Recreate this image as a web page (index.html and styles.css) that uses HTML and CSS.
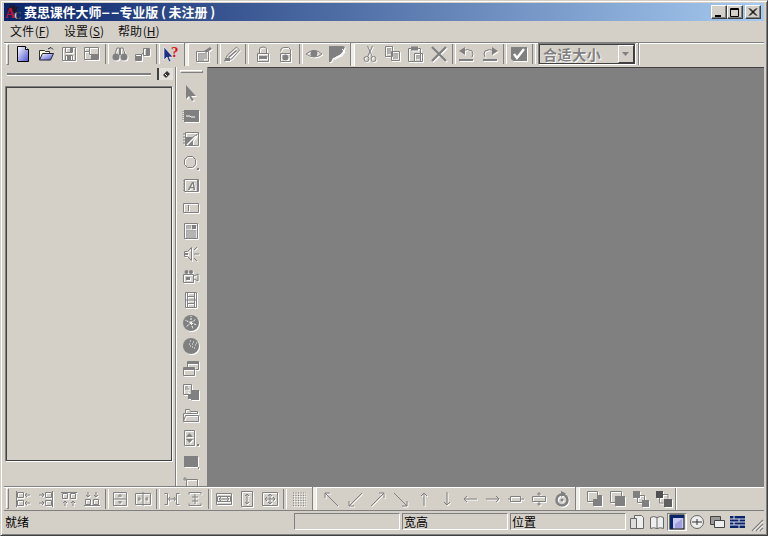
FILE: index.html

```html
<!DOCTYPE html>
<html lang="zh">
<head>
  <meta charset="UTF-8" />
  <title>赛思课件大师--专业版 ( 未注册 )</title>
  <link rel="stylesheet" href="styles.css">
</head>
<body>
  <svg class="defs" width="0" height="0"><linearGradient id="blue" x1="0" y1="0" x2="1" y2="1"><stop offset="0" stop-color="#fff"/><stop offset="1" stop-color="#4a52d0"/></linearGradient></svg>
  <div class="window">
    <div class="titlebar">
      <svg class="logo" width="17" height="18" viewBox="0 0 17 18"><path d="M5 0l2 3 3-2 0 3 4 0-3 3 2 3-5-1-3 2 0-4-3-1 3-2z" fill="#1a1a2a"/><text x="0" y="15" class="logo-a">A</text><text x="9" y="16" class="logo-c">C</text></svg>
      <span class="title-text">赛思课件大师<span class="dash">--</span>专业版 ( 未注册 )</span>
      <div class="caption-btns">
        <button class="cap"><svg width="10" height="9"><rect x="1" y="7" width="6" height="2" fill="#000"/></svg></button>
        <button class="cap"><svg width="10" height="9"><path d="M0.5 0.5h8v8h-8zM0.5 1.5h8" fill="none" stroke="#000"/></svg></button>
        <button class="cap close"><svg width="10" height="9"><path d="M1 0.5l7 7M2 0.5l7 7M8 0.5l-7 7M9 0.5l-7 7" stroke="#000" fill="none"/></svg></button>
      </div>
    </div>

    <div class="menubar">
      <span class="menu">文件 (<u>F</u>)</span>
      <span class="menu">设置 (<u>S</u>)</span>
      <span class="menu">帮助 (<u>H</u>)</span>
    </div>

    <div class="toolbar top-bar" id="topBar"></div>

    <div class="main">
      <div class="side-panel">
        <div class="panel-head">
          <div class="panel-line"></div>
          <div class="panel-pin"><svg width="9" height="9" viewBox="0 0 9 9"><path d="M1 5l4-4 3 3-4 4z" fill="#333"/><path d="M3 4l2 2" stroke="#fff"/></svg></div>
        </div>
        <div class="panel-box"></div>
      </div>
      <div class="tool-column">
        <div class="column-grip"></div>
        <div class="column-icons" id="toolColumn"></div>
      </div>
      <div class="canvas"></div>
    </div>

    <div class="toolbar bottom-bar" id="bottomBar"></div>

    <div class="statusbar">
      <div class="status-msg">就绪</div>
      <div class="status-cell blank"></div>
      <div class="status-cell">宽高</div>
      <div class="status-cell wide">位置</div>
      <div class="status-icons" id="statusIcons"></div>
      <svg class="size-grip" width="14" height="14" viewBox="0 0 14 14"><path d="M13 2L2 13M13 6l-7 7M13 10l-3 3" stroke="#808080" stroke-width="1.4"/><path d="M13 3.5L3.5 13M13 7.5L7.500 13M13 11.5L11.500 13" stroke="#fff"/></svg>
    </div>
  </div>
  <script src="app.js"></script>
</body>
</html>
```

FILE: styles.css

```css
* { box-sizing: border-box; }
html, body { margin: 0; padding: 0; }
body {
  width: 768px;
  height: 536px;
  overflow: hidden;
  background: #d4d0c8;
  font-family: "Noto Sans CJK SC", "Liberation Sans", sans-serif;
  font-size: 12px;
  color: #000;
}
.defs { position: absolute; }
.window {
  width: 768px;
  height: 536px;
  display: flex;
  flex-direction: column;
  padding: 3px;
  background: #d4d0c8;
  border: 1px solid #404040;
  border-top-color: #d4d0c8;
  border-left-color: #d4d0c8;
  box-shadow: inset 1px 1px 0 #fff, inset -1px -1px 0 #808080;
}

.titlebar {
  height: 18px;
  margin-top: -1px;
  display: flex;
  align-items: center;
  padding: 0 3px 0 1px;
  background: linear-gradient(to right, #0a246a, #a6caf0);
  color: #fff;
  flex: none;
}
.logo { flex: none; margin-right: 2px; overflow: visible; }
.logo-a { font: bold 14px "Liberation Serif", serif; fill: #c8102e; }
.logo-c { font: bold 10px "Liberation Serif", serif; fill: #eee; stroke: #111; stroke-width: 0.4px; }
.title-text { font-weight: bold; font-size: 13px; line-height: 18px; letter-spacing: -0.1px; white-space: pre; }
.dash {
  display: inline-block;
  width: 18px;
  transform: scaleX(2);
  transform-origin: 0 50%;
}
.caption-btns { margin-left: auto; display: flex; }
.cap {
  width: 16px;
  height: 14px;
  padding: 0;
  background: #d4d0c8;
  border: 1px solid;
  border-color: #fff #404040 #404040 #fff;
  box-shadow: inset -1px -1px 0 #808080;
  display: flex;
  align-items: center;
  justify-content: center;
}
.cap.close { margin-left: 2px; }

.menubar {
  height: 21px;
  flex: none;
  display: flex;
  align-items: center;
  padding: 0 0 2px 6px;
  font-size: 12px;
  color: #111;
}
.menu { width: 54px; flex: none; white-space: pre; word-spacing: -2px; }
.menu u { text-decoration: underline; }

.toolbar {
  display: flex;
  align-items: center;
  flex: none;
  border-top: 1px solid #808080;
  box-shadow: inset 0 1px 0 #fff;
  padding-left: 2px;
}
.top-bar { height: 25px; padding-bottom: 2px; }
.bottom-bar { height: 25px; border-bottom: 1px solid #808080; }

.grip {
  width: 3px;
  height: 21px;
  flex: none;
  margin-right: 2px;
  border: 1px solid;
  border-color: #fff #808080 #808080 #fff;
}
.grip.split {
  width: 5px;
  height: 23px;
  margin-left: 2px;
  margin-right: 3px;
  border-left-color: #808080;
  border-right-color: #fff;
  border-top: 0;
  border-bottom: 0;
  background: #f0eee8;
}
.bar-end {
  width: 2px;
  height: 22px;
  flex: none;
  border-left: 1px solid #808080;
  border-right: 1px solid #fff;
}
.tb {
  width: 23px;
  height: 22px;
  flex: none;
  display: flex;
  align-items: center;
  justify-content: center;
}
.tb svg, .col svg { overflow: visible; }
.dis svg { filter: drop-shadow(1px 1px 0 #fff); }
.sep {
  width: 5px;
  height: 20px;
  flex: none;
}
.sep.mid { width: 6px; }
.sep.wide { width: 8px; }
.sep::before {
  content: "";
  display: block;
  width: 2px;
  height: 20px;
  margin-left: 2px;
  border-left: 1px solid #808080;
  border-right: 1px solid #fff;
}
.combo {
  width: 98px;
  height: 22px;
  flex: none;
  display: flex;
  align-items: center;
  padding-left: 4px;
  margin-right: 2px;
  border: 1px solid;
  border-color: #808080 #fff #fff #808080;
  box-shadow: inset 1px 1px 0 #404040, inset -1px -1px 0 #404040;
  color: #808080;
  font-size: 14px;
  line-height: 18px;
  font-weight: bold;
  letter-spacing: 0.6px;
  text-shadow: 1px 1px 0 #fff;
}
.combo-arrow {
  width: 16px;
  height: 18px;
  margin-left: auto;
  margin-right: 1px;
  background: #d4d0c8;
  border: 1px solid;
  border-color: #fff #404040 #404040 #fff;
  display: flex;
  align-items: center;
  justify-content: center;
}

.main {
  flex: 1;
  min-height: 0;
  display: flex;
}
.side-panel {
  width: 172px;
  flex: none;
  padding: 0 1px;
  display: flex;
  flex-direction: column;
  border-right: 1px solid #808080;
  box-shadow: 1px 0 0 #fff;
}
.panel-head {
  height: 19px;
  flex: none;
  display: flex;
  align-items: center;
  padding: 0 0 5px 2px;
}
.panel-line {
  width: 144px;
  height: 2px;
  background: #808080;
  border-bottom: 1px solid #fff;
  box-sizing: content-box;
}
.panel-pin {
  width: 16px;
  height: 12px;
  margin-left: 6px;
  border-left: 2px solid #404040;
  display: flex;
  align-items: center;
  justify-content: center;
  background: #e4e0da;
}
.panel-box {
  width: 168px;
  height: 376px;
  border: 1px solid;
  border-color: #808080 #fff #fff #808080;
  box-shadow: inset 1px 1px 0 #404040, inset -1px -1px 0 #404040;
  background: #d4d0c8;
}
.tool-column {
  width: 31px;
  flex: none;
  margin-left: 1px;
  overflow: hidden;
  border-right: 1px solid #808080;
}
.column-grip {
  width: 23px;
  height: 3px;
  margin: 3px 0 0 3px;
  border: 1px solid;
  border-color: #fff #808080 #808080 #fff;
}
.column-icons { display: flex; flex-direction: column; margin-top: 8px; margin-left: 2px; }
.col {
  width: 24px;
  height: 23px;
  flex: none;
  display: flex;
  align-items: center;
  justify-content: center;
}
.canvas {
  flex: 1;
  background: #808080;
  border-top: 1px solid #404040;
}

.statusbar {
  height: 21px;
  flex: none;
  display: flex;
  align-items: center;
  position: relative;
  padding-left: 1px;
}
.status-msg { width: 289px; flex: none; }
.status-cell {
  width: 106px;
  height: 17px;
  flex: none;
  margin-right: 2px;
  padding-left: 1px;
  line-height: 16px;
  border: 1px solid;
  border-color: #808080 #fff #fff #808080;
}
.status-cell.wide { width: 116px; margin-right: 0; }
.status-icons { display: flex; margin-left: 1px; }
.stat {
  width: 20px;
  height: 18px;
  flex: none;
  display: flex;
  align-items: center;
  justify-content: center;
}
.stat.on {
  background: #e8e6e0;
  border: 1px solid;
  border-color: #808080 #fff #fff #808080;
}
.size-grip { position: absolute; right: 0; bottom: 0; }
.q { font: bold 15px "Liberation Serif", serif; fill: #e01010; }
.a { font: italic bold 11px "Liberation Sans", sans-serif; fill: #808080; }
```

FILE: app.js

```js
// every icon is a 16x16 drawing, gray ones get a white drop shadow from css
const S = 'fill="none" stroke="#808080"';
const G = 'fill="#808080"';
const icons = {
  newdoc: '<path d="M2.5 0.5h8l3 3v12h-11z" fill="url(#blue)" stroke="#000"/><path d="M10.5 0.5v3h3" fill="#fff" stroke="#000"/>',
  open: '<path d="M1.5 14V4.5h5l1 1h4v2" fill="#ffd" stroke="#333"/><path d="M1.5 14l3-6.5h11l-3 6.5z" fill="url(#blue)" stroke="#223"/><path d="M10 3l3-1.500 2 2" fill="none" stroke="#223"/>',
  save: `<path d="M1.5 1.5h13v13h-13z" ${S}/><path d="M4.5 1.5v5h7v-5M4.5 14.500v-5h7v5" ${S}/><rect x="9" y="2" width="2" height="4" ${G}/><rect x="6" y="10" width="4" height="4" ${G}/>`,
  saveall: `<path d="M0.500 1.5h14v12h-14zM0.500 5.500h5v3h9M5.500 5.500v-4" ${S}/><rect x="7" y="9" width="7" height="4" ${G}/>`,
  binoc: `<circle cx="4" cy="11" r="3.500" ${G}/><circle cx="12" cy="11" r="3.500" ${G}/><path d="M3 8l2-6h2.500v7h1V2H11l2 6" ${S}/>`,
  link: `<path d="M0.500 8.500h6v6h-6zM8.500 2.500h6v7h-6zM6 9l3-3" ${S}/><rect x="1" y="10" width="5" height="4" ${G}/><rect x="11" y="3" width="3" height="6" ${G}/>`,
  help: '<path d="M1 1v13l3-3 2 5 2-1-2-4h4z" fill="#1c2f86" stroke="#fff" stroke-width="0.6"/><text x="8" y="11" class="q">?</text>',
  props: `<path d="M0.500 5.500h12v10h-12z" ${S}/><path d="M2 8h9M2 10h9M2 12h9M2 14h6" ${S}/><path d="M8 5l6-4 2 2-6 4z" ${G}/>`,
  edit: `<path d="M0.500 15l3-6 9-8 3 3-8 9z" ${S}/><path d="M4 11l8-7 1 1-8 7z" ${G}/><path d="M1 12h5v3H1z" ${G}/>`,
  lock: `<path d="M4.500 7V3q0-2 3.500-2t3.500 2v4" ${S}/><path d="M2.500 7.500h11v8h-11z" ${S}/><rect x="4" y="10" width="8" height="3" ${G}/>`,
  lock2: `<path d="M2.500 5.500q0-4 3-4h5l2 2v4" ${S}/><path d="M2.500 7.500h10v8h-10z" ${S}/><circle cx="7.500" cy="11.500" r="3" ${G}/>`,
  eye: `<path d="M0 8q8-7 16 0q-8 6-16 0z" ${S}/><circle cx="8" cy="7.500" r="3.500" ${G}/>`,
  flag: `<path d="M0 0h14l2 1-3 6-5 4-4 1-2 4H0z" ${G}/><path d="M13 3l2 2-3 4-5 2-2 2" fill="none" stroke="#fff"/>`,
  cut: `<circle cx="4.500" cy="13" r="2.500" ${S}/><circle cx="11.500" cy="13" r="2.500" ${S}/><path d="M5.500 11L10.500 0M10.500 11L5.500 0" ${S}/>`,
  copy: `<path d="M0.500 0.500h7v10h-7zM6.500 5.500h8v9h-8z" ${S}/><path d="M2 3h4M2 5h4M2 7h4M8 8h5M8 10h5M8 12h5" ${S}/>`,
  paste: `<path d="M0.500 2.500h12v13h-12z" ${S}/><path d="M3 0.500h7v4H3z" ${G}/><path d="M6.500 7.500h8v8h-8zM8 10h5M8 12h5" ${S}/>`,
  del: '<path d="M1 1l14 14M15 1L1 15" stroke="#808080" stroke-width="2.400" fill="none"/>',
  undo: `<path d="M0 14h14" stroke="#808080" stroke-width="2"/><path d="M3 5q6-3 10 0 2 3 0 6" ${S}/><path d="M6 1L0 5l6 4z" ${G}/>`,
  redo: `<path d="M1 14h14" stroke="#808080" stroke-width="2"/><path d="M13 5q-6-3-10 0-2 3 0 6" ${S}/><path d="M10 1l6 4-6 4z" ${G}/>`,
  check: `<path d="M0 1h16v14H2l-2-2z" ${G}/><path d="M3 8l3 4 7-9" stroke="#fff" stroke-width="2.400" fill="none"/>`,
  arrow: `<path d="M3 0v14l3-3 3 5 2-1-3-4h5z" ${G}/>`,
  frame: `<rect x="1" y="2" width="15" height="12" ${G}/><path d="M3 8h4l1 1h4" stroke="#fff" fill="none"/><path d="M0 3v10" stroke="#808080" stroke-dasharray="1 1"/>`,
  pic: `<path d="M2.500 1.500h13v13h-13z" ${S}/><rect x="2" y="6" width="8" height="9" ${G}/><path d="M15 2L8 7l-3 6 5-3z" ${G}/><path d="M4 14l9-9" stroke="#fff" stroke-width="1.500"/><path d="M0 3h2M0 6h2M0 9h2M0 12h2" stroke="#808080"/>`,
  circle: `<path d="M4.500 2.500h5l3 3v5l-3 3h-5l-3-3v-5z" ${S}/><rect x="14" y="14" width="2" height="2" ${G}/>`,
  atext: `<path d="M1.500 2.500h14v12h-14z" ${S}/><path d="M0 4h2M0 7h2M0 10h2M0 13h2" stroke="#808080"/><text x="5" y="13" class="a">A</text><path d="M14.500 3v11" stroke="#808080"/>`,
  field: `<path d="M0.500 3.500h15v9h-15z" ${S}/><path d="M5.500 5v6" ${S}/>`,
  lines: `<path d="M1.500 0.500h13v15h-13z" ${S}/><path d="M3 3h5M3 5h5M3 8h10M3 10h10M3 12h10M3 14h10" ${S}/><rect x="9" y="2" width="4" height="4" ${G}/>`,
  sound: `<path d="M1.500 5.500h3l4-4v13l-4-4h-3z" ${S}/><path d="M2 7h3v2H2z" ${G}/><path d="M11 4l3-3M11 8h5M11 12l3 3" ${S}/>`,
  video: `<path d="M0.500 5.500h10v8h-10zM11 7l4-2v7l-4-2" ${S}/><circle cx="3.500" cy="3" r="2" ${G}/><circle cx="8" cy="3" r="2" ${G}/><path d="M3 8h4v3H3z" ${G}/>`,
  film: `<path d="M2.500 0.500h11v15h-11zM2.500 8h11M4.500 1v14M11.500 1v14M5 4.500h6M5 11.500h6" ${S}/>`,
  ball: `<circle cx="8" cy="8" r="8" ${G}/><path d="M8 8V1M8 8l5-4M8 8l6 2M8 8l2 6M8 8l-5 4M8 8L2 5" stroke="#fff" stroke-dasharray="2 1"/>`,
  globe: `<circle cx="8" cy="8" r="8" ${G}/><path d="M7 3h1M10 4h1M9 6h1M12 7h1M6 6h1M9 9h1M11 10h1M13 5h1M7 8h1" stroke="#fff"/>`,
  windows: `<path d="M4.500 0.500h11v8h-3M0.500 6.500h11v8h-11zM4.500 0.500v6" ${S}/><rect x="5" y="1" width="10" height="2" ${G}/><rect x="1" y="7" width="10" height="2" ${G}/>`,
  swap: `<path d="M0.500 0.500h8v10h-8zM2 3h3M2 5h4" ${S}/><rect x="8" y="6" width="8" height="10" ${G}/><path d="M5 8l4 4" stroke="#fff"/><rect x="5" y="10" width="4" height="5" ${G}/>`,
  folder: `<path d="M0.500 14.500V6.500h2v-4h4l1 2h7v2M3 6.500h12" ${S}/><path d="M0.500 14.500l2-6h13v6z" ${S}/>`,
  spin: `<path d="M1.500 0.500h10v15h-10z" ${S}/><path d="M6.500 3l3.500 4H3zM6.500 13L10 9H3z" ${G}/><rect x="14" y="14" width="2" height="2" ${G}/>`,
  rect: `<path d="M1 3h14v11H1z" ${G}/><rect x="15" y="14" width="1" height="2" ${G}/>`,
  cross: `<path d="M3.500 3.500h11v11h-11z" ${S}/><path d="M0 3h4M2 1v4" ${S}/>`,
  al1: `<path d="M1.500 0v16" ${S}/><path d="M2.500 1.500h6v5h-6zM2.500 9.500h6v5h-6zM15 4h-5M15 12h-5M12 2l-2 2 2 2M12 10l-2 2 2 2" ${S}/>`,
  al2: `<path d="M14.500 0v16" ${S}/><path d="M7.500 1.500h6v5h-6zM7.500 9.500h6v5h-6zM1 4h5M1 12h5M4 2l2 2-2 2M4 10l2 2-2 2" ${S}/>`,
  al3: `<path d="M0 1.500h16" ${S}/><path d="M1.500 2.500h5v5h-5zM9.500 2.500h5v5h-5zM4 15v-5M12 15v-5M2 12l2-2 2 2M10 12l2-2 2 2" ${S}/>`,
  al4: `<path d="M0 14.500h16" ${S}/><path d="M1.500 8.500h5v5h-5zM9.500 8.500h5v5h-5zM4 1v5M12 1v5M2 4l2 2 2-2M10 4l2 2 2-2" ${S}/>`,
  cv: `<path d="M1.500 1.500h13v13h-13zM1 8h14M8 3v3M8 10v3M6 5h4M6 11h4" ${S}/>`,
  ch: `<path d="M0.500 2.500h15v11h-15zM8 1v14M3 8h3M10 8h3M12 6v4M4 6v4" ${S}/>`,
  sh: `<path d="M0.500 2.500h3v11h-3M15.500 2.500h-3v11h3M5 8h6M6 6L4.500 8 6 10M10 6l1.500 2L10 10" ${S}/>`,
  sv: `<path d="M2 1.500h12M2 14.500h12M8 3v10M5 6h6M5 10h6M2 1.500v2M14 1.500v2M2 14.500v-2M14 14.500v-2" ${S}/>`,
  eqw: `<path d="M0.500 2.500h15v11h-15zM1.500 5.500h13v5h-13zM3 8h10M5 6L3 8l2 2M11 6l2 2-2 2" ${S}/>`,
  eqh: `<path d="M2.500 0.500h11v15h-11zM8 3v10M6 5l2-2 2 2M6 11l2 2 2-2" ${S}/>`,
  eqb: `<path d="M0.500 1.500h15v13h-15zM8 3v10M3 8h10M6 5l2-2 2 2M6 11l2 2 2-2M5 6L3 8l2 2M11 6l2 2-2 2" ${S}/>`,
  grid: '<path d="M2 2h13M2 4.500h13M2 7h13M2 9.500h13M2 12h13M2 14.500h13" stroke="#808080" stroke-dasharray="1 1.500"/>',
  nw: `<path d="M14 15L1 2M1 7V2h5" ${S}/>`,
  sw: `<path d="M15 2L2 15M2 10v5h5" ${S}/>`,
  ne: `<path d="M1 15L14 2M14 7V2H9" ${S}/>`,
  se: `<path d="M1 2l13 13M14 10v5H9" ${S}/>`,
  up: `<path d="M8 15V2M5 5l3-3 3 3" ${S}/>`,
  down: `<path d="M8 1v13M5 11l3 3 3-3" ${S}/>`,
  left: `<path d="M15 8H2M5 5L2 8l3 3" ${S}/>`,
  right: `<path d="M1 8h13M11 5l3 3-3 3" ${S}/>`,
  bw: `<path d="M2.500 5.500h10v5h-10zM0 8h2M13 8h3" ${S}/>`,
  bh: `<path d="M1.500 5.500h13v5h-13zM8 1v4M8 11v4M6 3h4M6 13h4" ${S}/>`,
  rotate: '<circle cx="8" cy="9" r="5.500" fill="none" stroke="#808080" stroke-width="2.500"/><circle cx="8" cy="9" r="1.500" fill="#808080"/><path d="M7 0l5 2.500L7 6z" fill="#808080"/>',
  fr1: `<path d="M0.500 0.500h10v10h-10z" ${S}/><rect x="6" y="8" width="9" height="7" ${G}/><rect x="11" y="4" width="4" height="5" ${G}/>`,
  fr2: `<path d="M0.500 0.500h11v11h-11z" ${S}/><rect x="5" y="5" width="10" height="10" ${G}/>`,
  fr3: `<rect x="0" y="0" width="7" height="7" ${G}/><path d="M4.500 4.500h7v7h-7z" ${S}/><rect x="9" y="9" width="7" height="7" ${G}/>`,
  fr4: `<rect x="0" y="0" width="7" height="7" fill="#505050"/><path d="M7 3.500h5v4M3.500 7v5h4" ${S}/><rect x="8" y="8" width="8" height="8" fill="#606060"/>`,
  s1: '<path d="M5.500 1.500h7l2 2v11h-9z" fill="#eee" stroke="#666"/><path d="M1.500 4.500h6v10h-6z" fill="#ddd" stroke="#666"/>',
  s2: '<path d="M1.500 3.500q3-2 6.500 0q3.500-2 6.500 0v11q-3-1.500-6.500 0q-3.500-1.500-6.500 0zM8 3.500v11" fill="#eee" stroke="#666"/>',
  s3: '<rect x="1" y="1" width="14" height="14" fill="#c8c8f0" stroke="#000"/><rect x="1" y="1" width="14" height="3" fill="#0a246a"/><rect x="1" y="4" width="3" height="11" fill="#0a246a"/><path d="M6 10l7-5v9H6z" fill="#a0a0e0"/>',
  s4: '<circle cx="8" cy="8" r="6.500" fill="#eee" stroke="#666"/><path d="M3 8h10M8 5v6" stroke="#333"/>',
  s5: '<path d="M1.500 2.500h10v8h-10z" fill="#999" stroke="#444"/><path d="M5.500 6.500h10v7h-10z" fill="#eee" stroke="#444"/>',
  s6: '<rect x="1" y="2" width="15" height="12" fill="#0a246a"/><path d="M1 5h15M1 8h15M1 11h15M5 2v3M10 5v3M5 8v3M10 11v3" stroke="#dde"/>'
};

function svg(name) {
  return `<svg width="16" height="16" viewBox="0 0 16 16">${icons[name]}</svg>`;
}

// "|" separator, "!" 6px one, "#" 8px one, "=" next toolbar starts here
function fillBar(el, list) {
  let html = '<div class="grip"></div>';
  list.forEach(item => {
    if (item === "|") html += '<div class="sep"></div>';
    else if (item === "!") html += '<div class="sep mid"></div>';
    else if (item === "#") html += '<div class="sep wide"></div>';
    else if (item === "=") html += '<div class="grip split"></div>';
    else if (item === "combo") {
      html += '<div class="combo">合适大小<span class="combo-arrow"><svg width="8" height="5"><path d="M0 0h7L3.5 4z" fill="#808080"/></svg></span></div><div class="bar-end"></div>';
    } else if (item === "end") html += '<div class="bar-end"></div>';
    else {
      const dim = !["newdoc", "open", "help"].includes(item);
      html += `<div class="tb ${dim ? "dis" : ""}">${svg(item)}</div>`;
    }
  });
  el.innerHTML = html;
}

fillBar(document.getElementById("topBar"), [
  "newdoc", "open", "save", "saveall", "|", "binoc", "link", "|", "help", "=",
  "props", "|", "edit", "#", "lock", "lock2", "|", "eye", "flag", "=",
  "cut", "copy", "paste", "del", "|", "undo", "redo", "!", "check", "#", "combo"
]);

fillBar(document.getElementById("bottomBar"), [
  "al1", "al2", "al3", "al4", "|", "cv", "ch", "!", "sh", "sv", "!", "eqw", "eqh", "eqb", "!", "grid", "=",
  "nw", "sw", "ne", "se", "up", "down", "left", "right", "bw", "bh", "rotate", "=",
  "fr1", "fr2", "fr3", "fr4", "end"
]);

document.getElementById("toolColumn").innerHTML = [
  "arrow", "frame", "pic", "circle", "atext", "field", "lines", "sound", "video", "film",
  "ball", "globe", "windows", "swap", "folder", "spin", "rect", "cross"
].map(n => `<div class="col dis">${svg(n)}</div>`).join("");

document.getElementById("statusIcons").innerHTML = ["s1", "s2", "s3", "s4", "s5", "s6"]
  .map(n => `<div class="stat ${n === "s3" ? "on" : ""}">${svg(n)}</div>`).join("");
```
